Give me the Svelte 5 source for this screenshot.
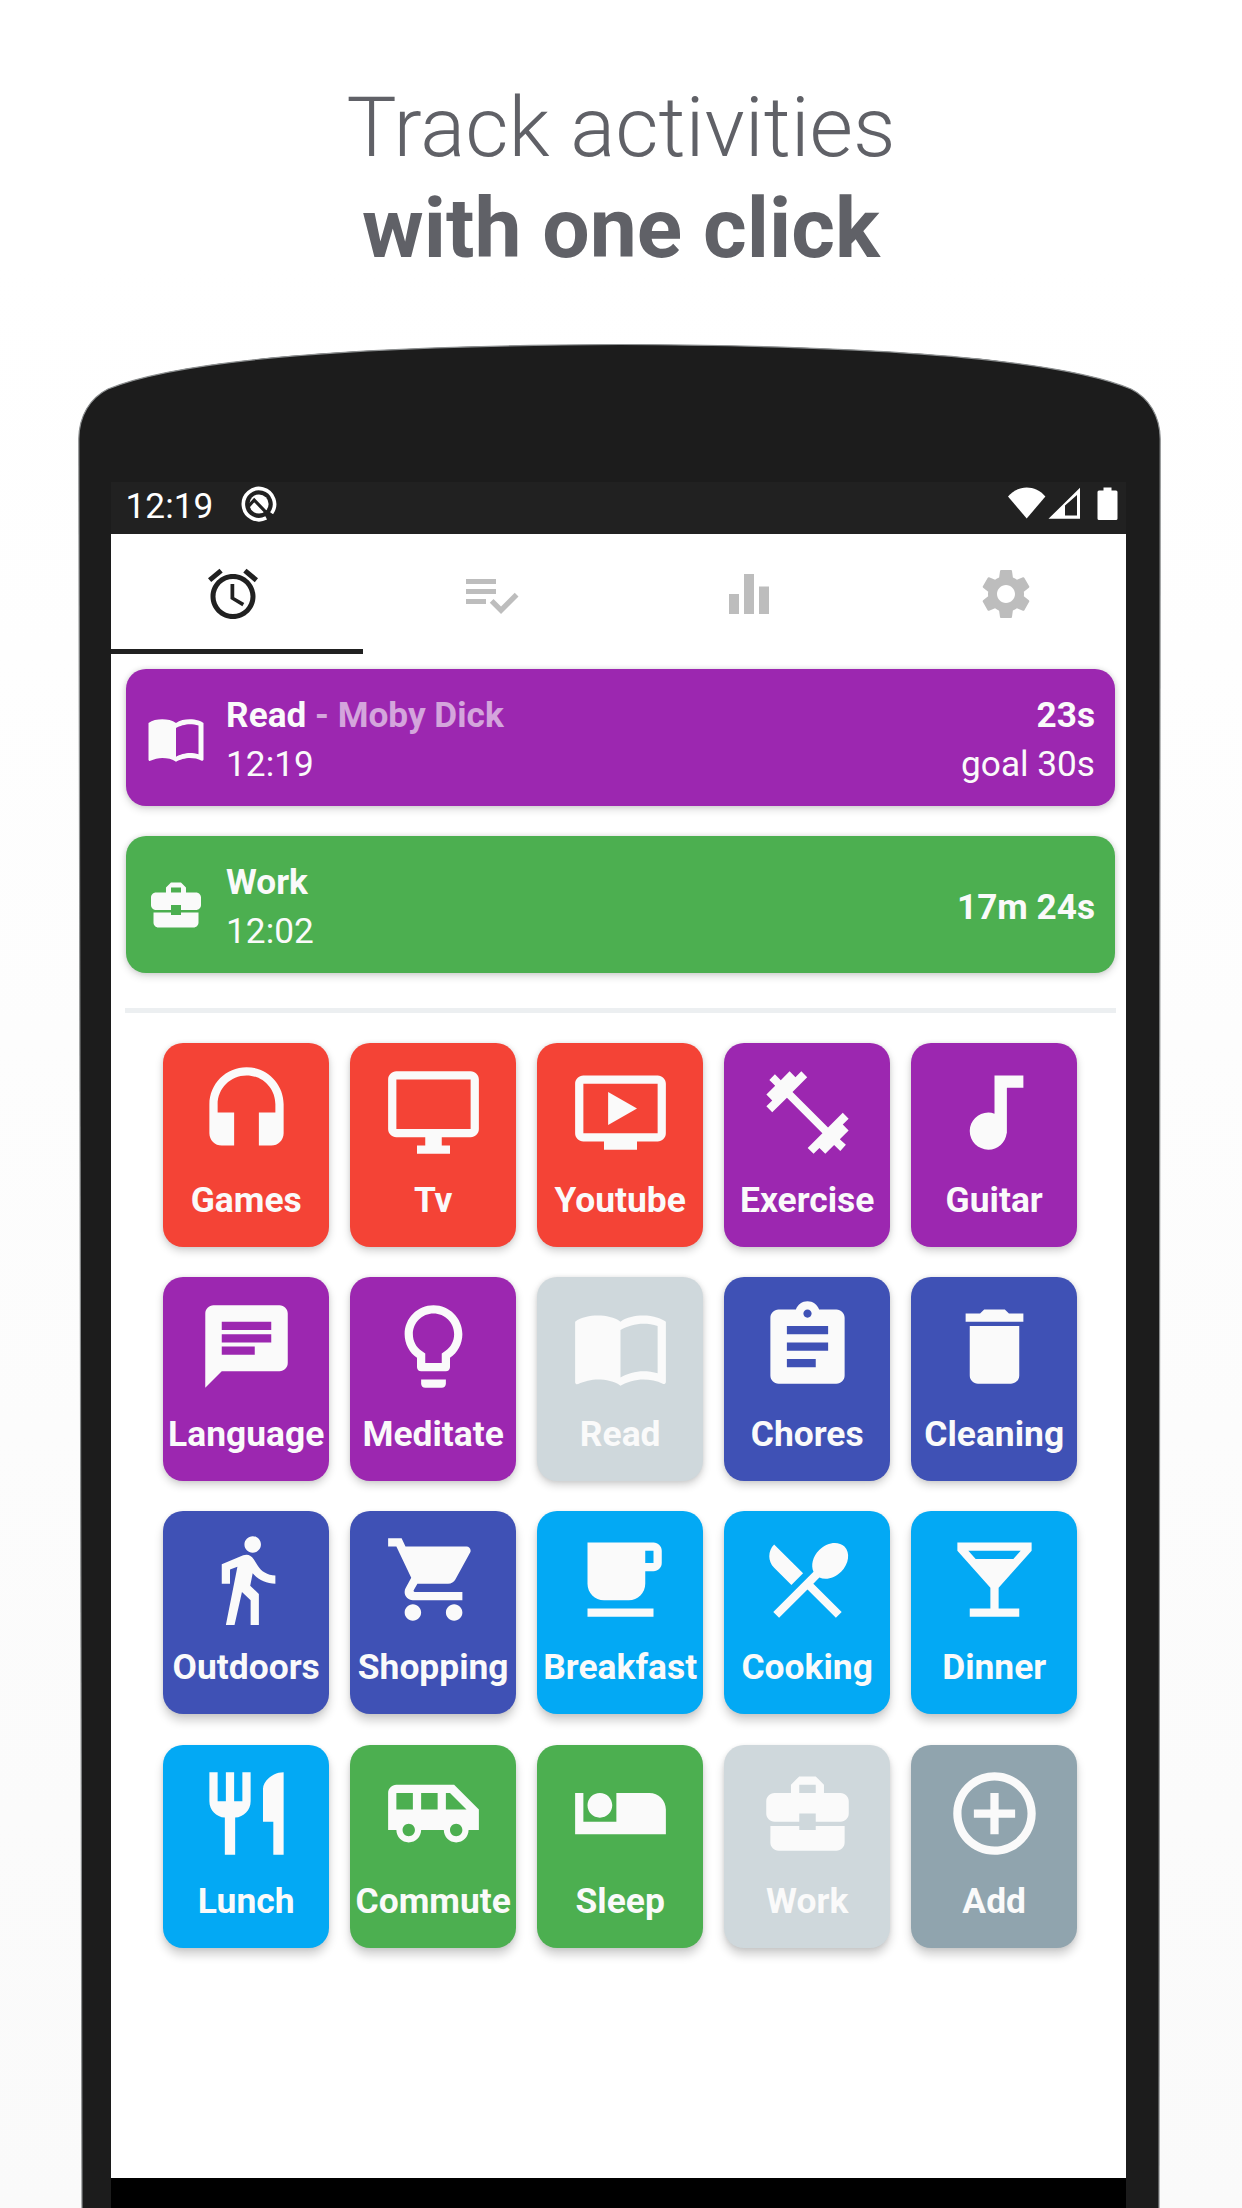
<script>
  const icons = {
    alarm: 'M22 5.72l-4.6-3.86-1.29 1.53 4.6 3.86L22 5.72zM7.88 3.39L6.6 1.86 2 5.71l1.29 1.53 4.59-3.85zM12.5 8H11v6l4.75 2.85.75-1.23-4-2.37V8zM12 4c-4.97 0-9 4.03-9 9s4.02 9 9 9c4.97 0 9-4.03 9-9s-4.03-9-9-9zm0 16c-3.87 0-7-3.13-7-7s3.13-7 7-7 7 3.13 7 7-3.13 7-7 7z',
    list: 'M14 10H2v2h12v-2zm0-4H2v2h12V6zM2 16h8v-2H2v2zm19.5-4.5L23 13l-6.99 7-4.51-4.5L13 14l3.01 3 5.49-5.5z',
    chart: 'M10 20h4V4h-4v16zm-6 0h4v-8H4v8zM16 9v11h4V9h-4z',
    settings: 'M19.14 12.94c.04-.3.06-.61.06-.94 0-.32-.02-.64-.07-.94l2.03-1.58c.18-.14.23-.41.12-.61l-1.92-3.32c-.12-.22-.37-.29-.59-.22l-2.39.96c-.5-.38-1.03-.7-1.62-.94L14.4 2.81c-.04-.24-.24-.41-.48-.41h-3.84c-.24 0-.43.17-.47.41L9.25 5.35C8.66 5.59 8.12 5.92 7.63 6.29L5.24 5.33c-.22-.08-.47 0-.59.22L2.74 8.87c-.12.21-.08.47.12.61l2.03 1.58C4.84 11.36 4.8 11.69 4.8 12s.02.64.07.94l-2.03 1.58c-.18.14-.23.41-.12.61l1.92 3.32c.12.22.37.29.59.22l2.39-.96c.5.38 1.03.7 1.62.94l.36 2.54c.05.24.24.41.48.41h3.84c.24 0 .44-.17.47-.41l.36-2.54c.59-.24 1.13-.56 1.62-.94l2.39.96c.22.08.47 0 .59-.22l1.92-3.32c.12-.22.07-.47-.12-.61l-2.01-1.58zM12 15.6c-1.98 0-3.6-1.62-3.6-3.6s1.62-3.6 3.6-3.6 3.6 1.62 3.6 3.6-1.62 3.6-3.6 3.6z',
    headset: 'M12 1c-4.97 0-9 4.03-9 9v7c0 1.66 1.34 3 3 3h3v-8H5v-2c0-3.87 3.13-7 7-7s7 3.13 7 7v2h-4v8h3c1.66 0 3-1.34 3-3v-7c0-4.97-4.03-9-9-9z',
    desktop: 'M21 2H3c-1.1 0-2 .9-2 2v12c0 1.1.9 2 2 2h7v2H8v2h8v-2h-2v-2h7c1.1 0 2-.9 2-2V4c0-1.1-.9-2-2-2zm0 14H3V4h18v12z',
    video: 'M21 3H3c-1.11 0-2 .89-2 2v12c0 1.1.89 2 2 2h5v2h8v-2h5c1.1 0 1.99-.9 1.99-2L23 5c0-1.11-.9-2-2-2zm0 14H3V5h18v12zm-5-6l-7 4V7z',
    dumbbell: 'M2.75 4.1L4.1 2.75l1.42 1.42L7.66 2.03l1.42 1.42 1.42-1.42 1.43 1.42-3.57 3.57 8.62 8.62 3.57-3.57 1.42 1.43-1.42 1.42 1.42 1.42-2.14 2.14 1.48 1.36-1.36 1.48-1.5-1.46-2.14 2.14-1.42-1.42-1.42 1.42-1.43-1.42 3.57-3.57L7.02 8.4 3.45 11.93 2.03 10.5l1.42-1.42L2.03 7.66l2.14-2.14z',
    note: 'M12 3v9.28c-.47-.17-.97-.28-1.5-.28C8.01 12 6 14.01 6 16.5S8.01 21 10.5 21c2.31 0 4.2-1.75 4.45-4H15V6h4V3h-7z',
    chat: 'M20 2H4c-1.1 0-1.99.9-1.99 2L2 22l4-4h14c1.1 0 2-.9 2-2V4c0-1.1-.9-2-2-2zM6 9h12v2H6V9zm8 5H6v-2h8v2zm4-6H6V6h12v2z',
    bulb: 'M9 21c0 .55.45 1 1 1h4c.55 0 1-.45 1-1v-1H9v1zm3-19C8.14 2 5 5.14 5 9c0 2.38 1.19 4.47 3 5.74V17c0 .55.45 1 1 1h6c.55 0 1-.45 1-1v-2.26c1.81-1.27 3-3.36 3-5.74 0-3.86-3.14-7-7-7zm2.85 11.1l-.85.6V16h-4v-2.3l-.85-.6C7.8 12.16 7 10.63 7 9c0-2.76 2.24-5 5-5s5 2.24 5 5c0 1.63-.8 3.16-2.15 4.1z',
    book: 'M21 5c-1.11-.35-2.33-.5-3.5-.5-1.95 0-4.05.4-5.5 1.5-1.45-1.1-3.55-1.5-5.5-1.5S2.45 4.9 1 6v14.65c0 .25.25.5.5.5.1 0 .15-.05.25-.05C3.1 20.45 5.05 20 6.5 20c1.95 0 4.05.4 5.5 1.5 1.35-.85 3.8-1.5 5.5-1.5 1.65 0 3.35.3 4.75 1.05.1.05.15.05.25.05.25 0 .5-.25.5-.5V6c-.6-.45-1.25-.75-2-1zm0 13.5c-1.1-.35-2.3-.5-3.5-.5-1.7 0-4.15.65-5.5 1.5V8c1.35-.85 3.8-1.5 5.5-1.5 1.2 0 2.4.15 3.5.5v11.5z',
    clipboard: 'M19 3h-4.18C14.4 1.84 13.3 1 12 1c-1.3 0-2.4.84-2.82 2H5c-1.1 0-2 .9-2 2v14c0 1.1.9 2 2 2h14c1.1 0 2-.9 2-2V5c0-1.1-.9-2-2-2zm-7 0c.55 0 1 .45 1 1s-.45 1-1 1-1-.45-1-1 .45-1 1-1zm2 14H7v-2h7v2zm3-4H7v-2h10v2zm0-4H7V7h10v2z',
    trash: 'M6 19c0 1.1.9 2 2 2h8c1.1 0 2-.9 2-2V7H6v12zM19 4h-3.5l-1-1h-5l-1 1H5v2h14V4z',
    walk: 'M13.5 5.5c1.1 0 2-.9 2-2s-.9-2-2-2-2 .9-2 2 .9 2 2 2zM9.8 8.9L7 23h2.1l1.8-8 2.1 2v6h2v-7.5l-2.1-2 .6-3C14.8 12 16.8 13 19 13v-2c-1.9 0-3.5-1-4.3-2.4l-1-1.6c-.4-.6-1-1-1.7-1-.3 0-.5.1-.8.1L6 8.3V13h2V9.6l1.8-.7',
    cart: 'M7 18c-1.1 0-1.99.9-1.99 2S5.9 22 7 22s2-.9 2-2-.9-2-2-2zM1 2v2h2l3.6 7.59-1.35 2.45c-.16.28-.25.61-.25.96 0 1.1.9 2 2 2h12v-2H7.42c-.14 0-.25-.11-.25-.25l.03-.12.9-1.63h7.45c.75 0 1.41-.41 1.75-1.03l3.58-6.49c.08-.14.12-.31.12-.48 0-.55-.45-1-1-1H5.21l-.94-2H1zm16 16c-1.1 0-1.99.9-1.99 2s.89 2 1.99 2 2-.9 2-2-.9-2-2-2z',
    cup: 'M20 3H4v10c0 2.21 1.79 4 4 4h6c2.21 0 4-1.79 4-4v-3h2c1.11 0 2-.9 2-2V5c0-1.11-.89-2-2-2zm0 5h-2V5h2v3zM4 19h16v2H4z',
    spoon: 'M8.1 13.34l2.83-2.83L3.91 3.5c-1.56 1.56-1.56 4.09 0 5.66l4.19 4.18zm6.78-1.81c1.53.71 3.68.21 5.27-1.38 1.91-1.91 2.28-4.65.81-6.12-1.46-1.46-4.2-1.1-6.12.81-1.59 1.59-2.09 3.74-1.38 5.27L3.7 19.87l1.41 1.41L12 14.41l6.88 6.88 1.41-1.41L13.41 13l1.47-1.47z',
    glass: 'M21 5V3H3v2l8 9v5H6v2h12v-2h-5v-5l8-9zM7.43 7L5.66 5h12.69l-1.78 2H7.43z',
    fork: 'M11 9H9V2H7v7H5V2H3v7c0 2.12 1.66 3.84 3.75 3.97V22h2.5v-9.03C11.34 12.84 13 11.12 13 9V2h-2v7zm5-3v8h2.5v8H21V2c-2.76 0-5 2.24-5 4z',
    bus: 'M17 5H3c-1.1 0-2 .89-2 2v9h2c0 1.65 1.34 3 3 3s3-1.35 3-3h5.5c0 1.65 1.34 3 3 3s3-1.35 3-3H23v-5l-6-6zM3 11V7h4v4H3zm3 6.5c-.83 0-1.5-.67-1.5-1.5s.67-1.5 1.5-1.5 1.5.67 1.5 1.5-.67 1.5-1.5 1.5zm7-6.5H9V7h4v4zm4.5 6.5c-.83 0-1.5-.67-1.5-1.5s.67-1.5 1.5-1.5 1.5.67 1.5 1.5-.67 1.5-1.5 1.5zM15 11V7h1l4 4h-5z',
    bed: 'M7 13c1.66 0 3-1.34 3-3S8.66 7 7 7s-3 1.34-3 3 1.34 3 3 3zm12-6h-8v7H3V7H1v10h22v-6c0-2.21-1.79-4-4-4z',
    briefcase: 'M10 16v-1H3.01L3 19c0 1.11.89 2 2 2h14c1.11 0 2-.89 2-2v-4h-7v1h-4zm10-9h-4.01V5l-2-2h-4l-2 2v2H4c-1.1 0-2 .9-2 2v3c0 1.11.89 2 2 2h6v-2h4v2h6c1.1 0 2-.9 2-2V9c0-1.1-.9-2-2-2zm-6 0h-4V5h4v2z',
    add: 'M13 7h-2v4H7v2h4v4h2v-4h4v-2h-4V7zm-1-5C6.48 2 2 6.48 2 12s4.48 10 10 10 10-4.48 10-10S17.52 2 12 2zm0 18c-4.41 0-8-3.59-8-8s3.59-8 8-8 8 3.59 8 8-3.59 8-8 8z'
  };

  const tabs = ['alarm', 'list', 'chart', 'settings'];

  const running = [
    { name: 'Read', note: 'Moby Dick', start: '12:19', elapsed: '23s', goal: 'goal 30s', icon: 'book', color: 'purple' },
    { name: 'Work', start: '12:02', elapsed: '17m 24s', icon: 'briefcase', color: 'green' }
  ];

  const rows = [
    [['Games', 'headset', 'red'], ['Tv', 'desktop', 'red'], ['Youtube', 'video', 'red'], ['Exercise', 'dumbbell', 'purple'], ['Guitar', 'note', 'purple']],
    [['Language', 'chat', 'purple'], ['Meditate', 'bulb', 'purple'], ['Read', 'book', 'off'], ['Chores', 'clipboard', 'indigo'], ['Cleaning', 'trash', 'indigo']],
    [['Outdoors', 'walk', 'indigo'], ['Shopping', 'cart', 'indigo'], ['Breakfast', 'cup', 'blue'], ['Cooking', 'spoon', 'blue'], ['Dinner', 'glass', 'blue']],
    [['Lunch', 'fork', 'blue'], ['Commute', 'bus', 'green'], ['Sleep', 'bed', 'green'], ['Work', 'briefcase', 'off'], ['Add', 'add', 'slate']]
  ];
</script>

{#snippet icon(name)}
  <svg class="icon" viewBox="0 0 24 24" aria-hidden="true"><path d={icons[name]} /></svg>
{/snippet}

<main class="page">
  <h1 class="headline">
    <span class="light">Track activities</span>
    <span class="bold">with one click</span>
  </h1>

  <div class="phone">
    <svg class="shell" viewBox="0 0 1242 1864" aria-hidden="true">
      <path d="M82 1874 L78.8 95 C79 72 90 54 108 45 C190 11 400 1.5 620 0.5 C840 1.5 1050 11 1131 45 C1149 54 1160 72 1160.2 95 L1159 1874 Z" />
    </svg>

    <div class="screen">
      <div class="statusbar">
        <span class="clock">12:19</span>
        <svg class="badge" viewBox="0 0 36 36" aria-hidden="true">
          <path d="M30.6 27.2 A15.6 15.6 0 1 0 25.2 31.9" fill="none" stroke="#fff" stroke-width="3.6" />
          <circle cx="18" cy="18" r="9.6" fill="#fff" />
          <path d="M7.2 20.6 L13.2 14 L30 31.5" fill="none" stroke="#212121" stroke-width="3.2" />
        </svg>
        <span class="spacer"></span>
        <svg class="signals" viewBox="0 0 110 34" aria-hidden="true">
          <path d="M0 9.5 C10 -2.5 27.4 -2.5 37.4 9.5 L18.7 31.5 Z" />
          <path fill-rule="evenodd" d="M40.5 31.8 L72 0.8 V31.8 Z M57 18.5 V28.6 H69 V8 Z" />
          <path d="M95.5 0.5 h8 v3 h4.5 q1.5 0 1.5 1.5 v26.5 q0 1.5 -1.5 1.5 h-17 q-1.5 0 -1.5 -1.5 v-26.5 q0 -1.5 1.5 -1.5 h4.5 z" />
        </svg>
      </div>

      <nav class="tabs">
        {#each tabs as tab, i}
          <span class="tab" class:active={i === 0}>{@render icon(tab)}</span>
        {/each}
      </nav>
      <div class="indicator"></div>

      <section class="running">
        {#each running as item}
          <article class="card {item.color}">
            {@render icon(item.icon)}
            <div class="info">
              <strong>{item.name}{#if item.note}<span class="note">{` - ${item.note}`}</span>{/if}</strong>
              <span>{item.start}</span>
            </div>
            <div class="info end">
              <strong>{item.elapsed}</strong>
              {#if item.goal}<span>{item.goal}</span>{/if}
            </div>
          </article>
        {/each}
      </section>

      <div class="divider"></div>

      <section class="grid">
        {#each rows as row, r}
          {#each row as [label, glyph, color]}
            <div class="tile {color}" class:low={r > 1}>
              {@render icon(glyph)}
              <span class="label">{label}</span>
            </div>
          {/each}
        {/each}
      </section>
    </div>
    <div class="navbar"></div>
  </div>
</main>

<style>
  :global(body) {
    margin: 0;
  }

  .page {
    width: 1242px;
    height: 2208px;
    overflow: hidden;
    box-sizing: border-box;
    padding-top: 76.5px;
    background: linear-gradient(#fff, #fff 12%, #fafafa);
    font-family: Roboto, 'Noto Sans', sans-serif;
    font-size: 35.2px;
    line-height: 48.6px;
    color: #fafafa;
  }

  .headline {
    display: flex;
    flex-direction: column;
    align-items: center;
    height: 267.5px;
    margin: 0;
    font-size: 84px;
    line-height: 101.4px;
    color: #606167;
  }

  .light {
    font-weight: 300;
  }

  .bold {
    font-weight: 700;
  }

  .phone {
    position: relative;
    height: 1864px;
    box-sizing: border-box;
    padding: 138px 115.7px 0 110.6px;
  }

  .shell {
    position: absolute;
    top: 0;
    left: 0;
    width: 1242px;
    height: 1864px;
    fill: #1c1c1c;
    stroke: #8c8f90;
    stroke-width: 1.2;
  }

  .screen {
    position: relative;
    height: 1696.3px;
    background: #fff;
    overflow: hidden;
  }

  .navbar {
    position: relative;
    height: 30px;
    background: #000;
  }

  .statusbar {
    display: flex;
    align-items: flex-start;
    height: 52px;
    box-sizing: border-box;
    padding: 5px 8.8px 0 15px;
    background: #212121;
    color: #fff;
  }

  .clock {
    width: 89px;
    line-height: 38px;
  }

  .badge {
    width: 36px;
    height: 36px;
    margin-left: 26px;
    margin-top: -1px;
  }

  .spacer {
    flex: 1;
  }

  .signals {
    width: 110px;
    height: 34px;
    fill: #fff;
  }

  .icon {
    display: block;
    flex: none;
    width: 60px;
    height: 60px;
    fill: currentColor;
  }

  .tabs {
    display: flex;
    justify-content: space-between;
    align-items: center;
    height: 115px;
    box-sizing: border-box;
    padding: 4.5px 90.2px 0 92.8px;
  }

  .tab {
    color: #bdbdbd;
  }

  .tab.active {
    color: #212121;
  }

  .indicator {
    width: 252px;
    height: 4.7px;
    background: #212121;
  }

  .running {
    display: flex;
    flex-direction: column;
    gap: 30.3px;
    padding: 15.5px 11.3px 0 15.5px;
  }

  .card {
    display: flex;
    align-items: center;
    gap: 20px;
    height: 136.8px;
    box-sizing: border-box;
    padding: 0 20px;
    border-radius: 20px;
    box-shadow: 0 3px 9px rgba(0, 0, 0, 0.16), 0 0 5px rgba(0, 0, 0, 0.1);
  }

  .info {
    display: flex;
    flex-direction: column;
    flex: 1;
    padding-top: 4.4px;
  }

  .info.end {
    align-items: flex-end;
  }

  .note {
    opacity: 0.6;
    white-space: pre;
  }

  .divider {
    height: 4.7px;
    margin: 35px 10.5px 0 14.5px;
    background: #eceff1;
  }

  .grid {
    display: grid;
    grid-template-columns: repeat(5, 166px);
    column-gap: 21px;
    row-gap: 30.3px;
    padding: 30.7px 0 0 52.6px;
  }

  .tile {
    display: flex;
    flex-direction: column;
    align-items: center;
    gap: 14px;
    height: 203.4px;
    box-sizing: border-box;
    padding-top: 19.5px;
    border-radius: 20px;
    box-shadow: 0 4px 9px rgba(0, 0, 0, 0.18), 0 0 4px rgba(0, 0, 0, 0.08);
  }

  .tile.low {
    box-shadow: 0 7px 10px rgba(0, 0, 0, 0.18), 0 1px 4px rgba(0, 0, 0, 0.08);
  }

  .tile .icon {
    width: 99px;
    height: 99px;
  }

  .label {
    font-size: 35.4px;
    font-weight: 700;
    white-space: nowrap;
  }

  .red {
    background: #f44336;
  }

  .purple {
    background: #9c27b0;
  }

  .indigo {
    background: #3f51b5;
  }

  .blue {
    background: #03a9f4;
  }

  .green {
    background: #4caf50;
  }

  .slate {
    background: #90a4ae;
  }

  .off {
    background: #cfd8dc;
  }
</style>
